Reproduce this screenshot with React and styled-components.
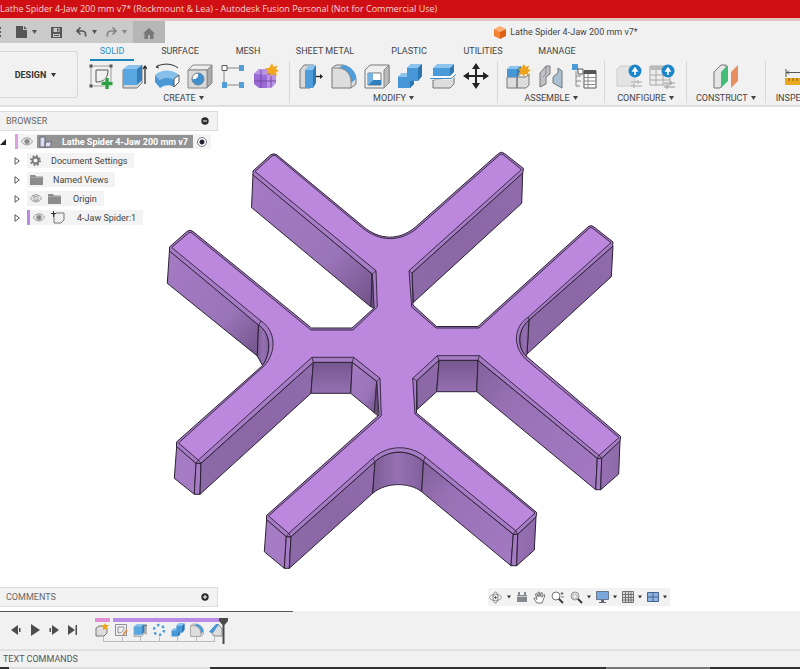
import React, { useState } from "react";
import styled, { createGlobalStyle } from "styled-components";

const GlobalStyle = createGlobalStyle`
  * {
    box-sizing: border-box;
  }
  body {
    margin: 0;
    font-family: Roboto, "Liberation Sans", sans-serif;
    font-size: 9px;
    color: #444;
    background: #f1f1f1;
  }
  button {
    display: flex;
    align-items: center;
    justify-content: center;
    margin: 0;
    padding: 0;
    border: 0;
    background: none;
    font: inherit;
    color: inherit;
    cursor: pointer;
  }
  svg {
    display: block;
    flex-shrink: 0;
  }
`;

const Page = styled.div`
  display: flex;
  flex-direction: column;
  min-height: 100vh;
  overflow: hidden;
`;

const TitleBar = styled.header`
  height: 21px;
  border-bottom: 3px solid #e3c3bd;
  background: #cf0f13;
  color: #f8d3d0;
  font-family: "Open Sans", sans-serif;
  font-size: 9px;
  line-height: 18px;
  white-space: nowrap;
`;

const QuickBar = styled.div`
  display: flex;
  align-items: stretch;
  height: 22px;

  .tools {
    display: flex;
    align-items: center;
    width: 133px;
    background: #cacaca;
    color: #555;
  }
  .home {
    width: 32px;
    padding-top: 2px;
    background: #b6b6b6;
    color: #777;
  }
  .document {
    display: flex;
    flex: 1;
    align-items: center;
    justify-content: center;
    gap: 4px;
    margin-left: 200px;
    margin-right: 33px;
    white-space: nowrap;
  }
`;

const QuickButton = styled.button`
  gap: 5px;
  width: ${(props) => props.$width}px;
  opacity: ${(props) => (props.$faded ? 0.6 : 1)};
`;

const Ribbon = styled.div`
  display: flex;
  height: 64px;
  border-bottom: 2px solid #e0e0e0;
`;

const DesignButton = styled.button`
  flex-shrink: 0;
  gap: 5px;
  width: 78px;
  height: 47px;
  margin-top: 8px;
  padding-right: 6px;
  border: 1px solid #d8d8d8;
  border-left: 0;
  border-radius: 0 3px 3px 0;
  color: #333;
  font-weight: 700;
`;

const RibbonBody = styled.div`
  min-width: 0;
  flex: 1;
`;

const Tabs = styled.nav`
  display: flex;
  height: 18px;
  padding-left: 12px;
`;

const Tab = styled.button`
  width: ${(props) => props.$width}px;
  flex-shrink: 0;
  border-bottom: 2px solid ${(props) => (props.$active ? "#1d86bd" : "transparent")};
  color: ${(props) => (props.$active ? "#2a8fc4" : "#444")};
`;

const Groups = styled.div`
  display: flex;
  height: 42px;
`;

const Group = styled.section`
  display: flex;
  flex-direction: column;
  align-items: center;
  flex-shrink: 0;
  gap: 3px;
  padding: 2px ${(props) => props.$pad}px 0;
  border-right: 1px solid #d6d6d6;

  .icons {
    display: flex;
    gap: 7px;
  }
  .label {
    gap: 3px;
    white-space: nowrap;
    line-height: 12px;
  }
`;

const Viewport = styled.main`
  display: grid;
  flex: 1;
  background: #fff;

  > * {
    grid-area: 1 / 1;
    min-width: 0;
  }
`;

const Overlay = styled.div`
  display: flex;
  flex-direction: column;
  justify-content: space-between;
  padding: 4px 0;
  z-index: 1;
`;

const PanelHeader = styled.div`
  display: flex;
  align-items: center;
  justify-content: space-between;
  width: 218px;
  height: 20px;
  padding: 0 8px 0 6px;
  border: 1px solid #ddd;
  border-left: 0;
  background: #f2f2f2;
  color: #666;
`;

const Tree = styled.ul`
  display: flex;
  flex-direction: column;
  gap: 4px;
  margin: 3px 0 0;
  padding: 0;
  list-style: none;
`;

const TreeRow = styled.li`
  display: flex;
  align-items: center;
  height: 15px;

  .toggle {
    width: ${(props) => (props.$root ? 15 : 27)}px;
    padding-left: ${(props) => (props.$root ? 0 : 7)}px;
    padding-right: ${(props) => (props.$root ? 8 : 0)}px;
  }
`;

const TreeItem = styled.div`
  display: flex;
  align-items: center;
  gap: ${(props) => props.$gap || 4}px;
  height: 15px;
  padding: 0 4px 0 3px;
  background: #f3f3f3;
  border-left: ${(props) => (props.$bar ? `3px solid ${props.$bar}` : "0")};
  white-space: nowrap;

  .name {
    margin-left: 6px;
    margin-right: 3px;
  }
  input {
    appearance: none;
    width: 10px;
    height: 10px;
    margin: 0;
    border: 1px solid #778;
    border-radius: 50%;
    background: radial-gradient(#223 0 2px, #fff 3px);
  }
`;

const RootName = styled.label`
  display: flex;
  align-items: center;
  gap: 10px;
  height: 13px;
  padding: 0 5px 0 2px;
  background: #939393;
  color: #fff;
  font-weight: 700;
`;

const BottomRow = styled.div`
  display: flex;
  align-items: center;
  justify-content: space-between;
  padding-right: 130px;
`;

const NavBar = styled.div`
  display: flex;
  align-items: center;
  justify-content: space-between;
  width: 182px;
  height: 18px;
  padding: 0 3px 0 1px;
  background: #f2f2f2;

  button {
    gap: 4px;
    color: #333;
  }
`;

const Timeline = styled.footer`
  display: flex;
  align-items: flex-start;
  height: 40px;
  border-bottom: 2px solid #e0e0e0;

  &::before {
    content: "";
    width: 293px;
    height: 1px;
    margin-right: -293px;
    background: #555a60;
  }
`;

const Playback = styled.div`
  display: flex;
  align-items: center;
  gap: 7px;
  width: 95px;
  height: 38px;
  padding-left: 10px;
  color: #4c4c4c;
`;

const Track = styled.div`
  width: 124px;
  padding-top: 7px;

  .bars {
    display: flex;
    gap: 3px;
  }
  .steps {
    display: flex;
    gap: 5px;
    padding-top: 1px;
  }
  .rail {
    display: flex;
    justify-content: space-between;
    width: 112px;
    height: 5px;
    margin-left: 8px;
    border-bottom: 1px solid #bbb;
  }
  .rail span {
    width: 1px;
    background: #bbb;
  }
`;

const Bar = styled.span`
  flex: ${(props) => (props.$grow ? 1 : "0 0 15px")};
  height: 4px;
  background: ${(props) => props.$color};
`;

const Marker = styled.div`
  padding-top: 7px;
`;

const TextCommands = styled.div`
  height: 18px;
  padding-left: 3px;
  border-bottom: 2px solid #333;
  border-image: linear-gradient(
      90deg,
      #333 0 11px,
      #ddd 11px 211px,
      #333 211px 605px,
      #777 605px 708px,
      #333 708px
    )
    2;
  color: #555;
  line-height: 16px;
`;

const Caret = ({ size = 5 }) => (
  <svg width={size} height="4" viewBox="0 0 5 4">
    <path d="M0 0h5L2.5 4z" fill="currentColor" />
  </svg>
);

// 26x26 drawings of the ribbon
const icons = {
  sketch: (
    <>
      <path d="M3 3h20v20H3z" fill="none" stroke="#888" strokeWidth=".8" />
      <path d="M8 19V7h12c0 8-4 12-12 12z" fill="none" stroke="#555" strokeWidth="1" />
      <path d="M1.500 1.500h3v3h-3zM21.500 1.500h3v3h-3zM1.500 21.500h3v3h-3z" fill="#555" />
      <path d="M19 15v11M13.500 20.500h11" stroke="#f1f1f1" strokeWidth="5" />
      <path d="M19 15v11M13.500 20.500h11" stroke="#2ea043" strokeWidth="3.400" />
    </>
  ),
  extrude: (
    <>
      <path d="M2 7v18h14l5-5V2" fill="#d8d8d8" stroke="#777" />
      <path d="M2 6l5-4h14l-5 4z" fill="#8cc4ee" />
      <path d="M2 6h14v16H2z" fill="#5aa6e0" />
      <path d="M16 6l5-4v15l-5 5z" fill="#3480bd" />
      <path d="M24 21V4M22 6l2-3 2 3" fill="none" stroke="#222" strokeWidth="1.200" />
    </>
  ),
  revolve: (
    <>
      <path d="M2 4c6-4 16-4 22 1M2 4l3-2M2 4l3 1" fill="none" stroke="#333" />
      <path d="M1 12c6-6 18-6 24 0l-5 5c-4-3-10-3-14 0z" fill="#86bfea" />
      <path d="M1 12l5 5v8l-5-6zM6 17c4-3 10-3 14 0v7c-4-3-10-2-14 1z" fill="#4b98d5" />
      <path d="M20 16l5-4v7l-5 5z" fill="#fff" stroke="#555" />
    </>
  ),
  hole: (
    <>
      <path d="M1 7l5-5h19l-5 5z" fill="#eee" stroke="#888" />
      <path d="M20 7l5-5v18l-5 5z" fill="#aaa" stroke="#888" />
      <path d="M1 7h19v18H1z" fill="#d9d9d9" stroke="#888" />
      <circle cx="11" cy="16" r="6" fill="#fff" stroke="#777" />
      <path d="M11 10a6 6 0 1 1-6 6c4 1 7-2 6-6z" fill="#3f8fcd" />
    </>
  ),
  pattern: (
    <>
      <path d="M4 5h17M4 5v17h17" fill="none" stroke="#888" />
      <path d="M2 2.500h5v5H2z" fill="#fff" stroke="#555" />
      <path d="M19 2h5v6h-5zM2 19h5v6H2zM19 19h5v6h-5z" fill="#559fd8" />
    </>
  ),
  form: (
    <>
      <path d="M1 11l5-5h12l5 5v9l-5 5H6l-5-4z" fill="#9a6bd5" />
      <path d="M1 11l5-5h12l-4 6zM14 12l9-1v9l-5 5h-4z" fill="#b893e6" />
      <path d="M1 18h22M8 7v18M18 8v16" stroke="#73489f" fill="none" />
      <path d="M19 0l1.500 4 4-1.500L23 6l3 2-3 1 1 4-4-2-2 3-1-4-4 1 2-3-3-3 4 0z" fill="#f2a81d" />
    </>
  ),
  pressPull: (
    <>
      <path d="M2 7l4-5h10v18l-4 5H2z" fill="#d9d9d9" stroke="#777" />
      <path d="M7 7l4-5h7l-3 5z" fill="#8cc4ee" />
      <path d="M7 7h8v18H7z" fill="#4e9cda" />
      <path d="M15 7l3-5v18l-3 5z" fill="#2f79b4" />
      <path d="M18 13.500h6" stroke="#222" strokeWidth="1.300" />
      <path d="M22 11l3 2.500-3 2.500z" fill="#222" />
    </>
  ),
  fillet: (
    <>
      <path d="M1 25V5l4-3h7c8 2 13 8 13 15v4l-5 4z" fill="#ddd" stroke="#777" />
      <path d="M8 5l4-3c8 1 13 7 13 14l-5 4C20 12 16 6 8 5z" fill="#4f9ddb" />
      <path d="M1 5h7c8 1 12 7 12 14v6" fill="none" stroke="#888" />
    </>
  ),
  shell: (
    <>
      <path d="M1 7l5-5h19v18l-5 5H1z" fill="#eee" stroke="#777" />
      <path d="M20 7l5-5v18l-5 5z" fill="#bbb" stroke="#888" />
      <path d="M4 10h13v12H4z" fill="#fff" stroke="#777" />
      <path d="M4 10h5v7l-5 5z" fill="#74b2e2" />
      <path d="M4 22l5-5h8v5z" fill="#2f7fbe" />
    </>
  ),
  combine: (
    <>
      <path d="M1 14l4-4h5V5l4-4h11v12l-4 5h-4v3l-4 4H1z" fill="#4797d6" />
      <path d="M10 5l4-4h11l-4 4zM1 14l4-4h5v4z" fill="#8cc4ee" />
      <path d="M21 5l4-4v12l-4 5zM13 18h4v3l-4 4z" fill="#2c75b0" />
    </>
  ),
  split: (
    <>
      <path d="M3 17v8h17l4-4v-7z" fill="#ddd" stroke="#777" />
      <path d="M3 5l4-4h17l-4 4z" fill="#8cc4ee" />
      <path d="M3 5h17v8H3z" fill="#4a9bd9" />
      <path d="M20 5l4-4v8l-4 4z" fill="#2f79b4" />
      <path d="M0 15h21l5-4" fill="none" stroke="#fff" strokeWidth="3" />
      <path d="M0 15.500h21l5-4" fill="none" stroke="#3a88c5" />
    </>
  ),
  move: (
    <>
      <path d="M13 4v18M4 13h18" stroke="#222" strokeWidth="2" />
      <path d="M13 0l4 6H9zM13 26l4-6H9zM0 13l6-4v8zM26 13l-6-4v8z" fill="#222" />
    </>
  ),
  component: (
    <>
      <path d="M2 14h10v11H2zM12 14h9l3-3v11l-3 3h-9z" fill="#ddd" stroke="#777" />
      <path d="M2 6l3-3h11l-4 3z" fill="#8cc4ee" />
      <path d="M2 6h10v8H2z" fill="#4797d6" />
      <path d="M12 6l4-3v8l-4 3z" fill="#2f79b4" />
      <path d="M19 1l1.500 3L24 2.500 23 6l3 1.500L23 9l1 3-4-1-1 3-2-3-4 1 2-4-2-2 3-1z" fill="#eda41c" />
    </>
  ),
  joint: (
    <>
      <path d="M2 10l6-7h4v8l-4 3v7l-6 3z" fill="#bfc3c7" stroke="#777" />
      <path d="M16 13l4-3V5l4 3v17l-9-5v-5z" fill="#a9c1d3" stroke="#777" />
      <path d="M8 3v8l-3 3" fill="none" stroke="#888" />
    </>
  ),
  bom: (
    <>
      <path d="M1 1h6v6H1z" fill="#4b9ad8" />
      <path d="M7 6h5v5H7z" fill="#fff" stroke="#555" />
      <path d="M5 8v15h4M5 13h5M5 18h5" fill="none" stroke="#888" />
      <path d="M13 8h12v17H13z" fill="#fff" stroke="#555" />
      <path d="M13 7h12v4H13z" fill="#555" />
      <path d="M13 14.500h12M13 18h12M13 21.500h12M17 11v14" stroke="#888" />
    </>
  ),
  configure: (
    <>
      <path d="M1 6l4-3h14v17l-3 3H1z" fill="#e3e3e3" stroke="#ccc" />
      <path d="M15 19h11M15 23h11M22 17v4M18 21v4" stroke="#aaa" />
      <circle cx="19" cy="8" r="6.500" fill="#1d85c9" />
      <path d="M19 12V6M17 8l2-3 2 3z" fill="#fff" stroke="#fff" strokeWidth="1.500" />
    </>
  ),
  configTable: (
    <>
      <path d="M1 3h20v19H1z" fill="#eee" stroke="#aaa" />
      <path d="M1 3h20v4H1z" fill="#bbb" />
      <path d="M1 12h20M1 17h20M7 7v15M14 7v15" stroke="#aaa" />
      <path d="M15 20h11M15 24h11M22 18v4M18 22v4" stroke="#999" />
      <circle cx="19" cy="8" r="6.500" fill="#1d85c9" />
      <path d="M19 12V6M17 8l2-3 2 3z" fill="#fff" stroke="#fff" strokeWidth="1.500" />
    </>
  ),
  plane: (
    <>
      <path d="M1 9l7-7h5v16l-6 7H1z" fill="#e6e6e6" stroke="#777" />
      <path d="M8 9l7-7v16l-7 7z" fill="#43bd77" />
      <path d="M18 9l7-7v16l-7 7z" fill="#e58e60" />
    </>
  ),
  measure: (
    <>
      <path d="M1 6v8M1 9.500h24M4 7.500l-2 2 2 2" fill="none" stroke="#555" />
      <path d="M0 15h26v7H0z" fill="#e9a81f" />
      <path d="M4 15v3M8 15v3M12 15v3M16 15v3" stroke="#7e5b12" />
    </>
  ),
};

const Icon = ({ name, size = 26 }) => (
  <svg width={size} height={size} viewBox="0 0 26 26">
    {icons[name]}
  </svg>
);

const Eye = ({ off }) => (
  <svg width="12" height="9" viewBox="0 0 12 9">
    <path d="M.5 4.500C3-.5 9-.5 11.500 4.500 9 9 3 9 .5 4.500z" fill="#eee" stroke="#999" />
    <circle cx="6" cy="4.500" r="2.300" fill={off ? "#eee" : "#888"} stroke="#999" />
    {off && <path d="M2 1l7 7" stroke="#aaa" />}
  </svg>
);

const Folder = () => (
  <svg width="13" height="10" viewBox="0 0 13 10">
    <path d="M0 0h5l1 1.500h7V10H0z" fill="#8c8c8c" />
    <path d="M0 2.500h13" stroke="#bbb" strokeWidth=".6" />
  </svg>
);

const Expander = ({ open }) => (
  <svg width="7" height="8" viewBox="0 0 7 8">
    {open ? <path d="M6 1v6H0z" fill="#222" /> : <path d="M1 .7v6.600L5.300 4z" fill="#fff" stroke="#555" />}
  </svg>
);

const RoundButton = ({ plus }) => (
  <button aria-label={plus ? "Expand" : "Collapse"}>
    <svg width="8" height="8" viewBox="0 0 8 8">
      <circle cx="4" cy="4" r="3.700" fill="#2b2b2b" />
      <path d={plus ? "M2 4h4M4 2v4" : "M2 4h4"} stroke="#fff" />
    </svg>
  </button>
);

const walls = [
  ["M253 174L372 274L371 307L251.500 207.500Z", "right"],
  ["M169.500 250L258.500 325L257.300 356L167.300 283.300Z", "right"],
  ["M258.500 325C271 333 272 352 262.500 365.500L257.300 356Z", "bend"],
  ["M412 273L522.700 172.700L521.700 203.300L413.300 302.500Z", "left"],
  ["M529 320L613 246L611.300 276.700L527 354Z", "left"],
  ["M529 320C515 332 519 350 526 356L527 354Z", "bend"],
  ["M176.700 446L196 463.300L194.300 494.300L174.300 478.300Z", "flat"],
  ["M196 463.300H201L200 494.300H194.300Z", "flat"],
  ["M201 463.300L313.300 362.300L311 393.300L200 494.300Z", "left"],
  ["M313.300 362.300H352.300L350.700 393.300H311Z", "down"],
  ["M352.300 362.300L376.700 381.300L374.300 412.700L350.700 393.300Z", "right"],
  ["M266.700 519L286.300 536.700L284.300 568.300L264.300 551.700Z", "flat"],
  ["M286.300 536.700H291L289.300 568.300H284.300Z", "flat"],
  ["M291 536.700L375 461.700L372.700 493.300L289.300 568.300Z", "left"],
  ["M375 461.700C383 454 391 452.300 400 452.300S415 455 423.500 461.300L421.700 491.700C409 482 386 482 372.700 493.300Z", "bend"],
  ["M423.500 461.300L513.300 534.300L511 565.700L421.700 491.700Z", "out"],
  ["M513.300 534.300H517.700L516.700 565.700H511Z", "flat"],
  ["M517.700 534.300L536 516.700L534.300 550L516.700 565.700Z", "end"],
  ["M416.700 380.700L439 360.300L436.700 391.700L417.300 409.300Z", "left"],
  ["M439 360.300H478L476.700 391.700H436.700Z", "down"],
  ["M478 360.300L597.300 458.300L595.700 489.700L476.700 391.700Z", "out"],
  ["M597.300 458.300H601.700L600.700 489.700H595.700Z", "flat"],
  ["M601.700 458.300L620 440.700L618.700 474L600.700 489.700Z", "end"],
];

const bevelPath =
  "M271 154.500Q274 153 277 155L363.300 226.500C380 240.500 399 240.500 415 227.500L498.500 153.500Q501.500 151 504.500 153.500L523.500 168.500L522.700 173L412 273L413 305L436.500 326.500H478L588.500 226.500Q591.500 224.500 594 227L613 242L612.500 246.500L529 320C515 332 519 350 526 356L620.700 436.500L620 441L601.700 458.300H597.300L478 360.300H439L416.700 380.700L416.500 413L536.700 512.500L536 517L517.700 534.300H513.300L423.500 461.300C409 449 389 449 375 461.700L291 536.700H286.300L266.500 519.500V515.500L379 415L376.700 381.300L352.300 362.300H313.300L201 463.300H196L176.500 446.500V442L262.500 365.500C272 352 271 333 258.500 325L169.500 251V247L187 231.500Q190 229 193 231.500L311.500 328H352L374 308L372.300 274L253 175V171Z";

const topPath =
  "M272 156Q274 154.500 276 156L362.500 228C380 242 400 242 416 229L499.500 155Q501.500 153.500 503.500 155L521.500 169.500L409 270.700L411.700 307L436 328H479L589.500 228Q591 227 593 228.500L611 242.700L528.300 317C513 327 513 347 525.500 359L619 437.500L599.300 455H598.500L479.300 355.700H437.300L412.700 378.300L415 414L535 513L515.700 530.700L425 456.700C410 444.500 388 444.500 372.700 458.300L288.700 533.300L268.500 516L381.300 415.700L380 378.300L353.700 357.300H312L198.300 460L178.500 443L264 366C277 352 276 331 261 321L171.700 247.500L188.500 233Q190 231.500 192 233L311 330H353L377.300 307L376 270.700L255 171.500Z";

const Model = () => (
  <svg width="100%" height="100%" viewBox="0 107 800 504" role="img" aria-label="4-Jaw Spider">
    <defs>
      <linearGradient id="right" x1="0" y1="0" x2="1" y2="1">
        <stop offset="0" stopColor="#a57bc4" />
        <stop offset=".65" stopColor="#9a74b8" />
        <stop offset="1" stopColor="#715389" />
      </linearGradient>
      <linearGradient id="left" x1="1" y1="0" x2="0" y2="1">
        <stop offset="0" stopColor="#916cad" />
        <stop offset=".5" stopColor="#8b67a6" />
        <stop offset="1" stopColor="#8c69a7" />
      </linearGradient>
      <linearGradient id="down" x1="0" y1="0" x2="0" y2="1">
        <stop offset="0" stopColor="#76578f" />
        <stop offset="1" stopColor="#9570b1" />
      </linearGradient>
      <linearGradient id="bend">
        <stop offset="0" stopColor="#7d5e96" />
        <stop offset=".5" stopColor="#9670b3" />
        <stop offset="1" stopColor="#81609b" />
      </linearGradient>
      <linearGradient id="out" x1="0" y1="0" x2="1" y2="1">
        <stop offset="0" stopColor="#80609a" />
        <stop offset=".3" stopColor="#9871b5" />
        <stop offset="1" stopColor="#a37ac2" />
      </linearGradient>
      <linearGradient id="end">
        <stop offset="0" stopColor="#9670b3" />
        <stop offset="1" stopColor="#8e6aa9" />
      </linearGradient>
      <linearGradient id="flat">
        <stop offset="0" stopColor="#a57cc4" />
        <stop offset="1" stopColor="#a57cc4" />
      </linearGradient>
    </defs>
    <g stroke="#2c2135" strokeLinejoin="round">
      {walls.map(([d, shade]) => (
        <path key={d} d={d} fill={`url(#${shade})`} />
      ))}
      <path d={bevelPath} fill="#a77cc6" />
      <path d={topPath} fill="#bb88de" strokeWidth=".9" />
      <path d="M372.300 274L371 307L374 308.500ZM376.700 381.300L374.300 413L378 416Z" fill="#6b5080" strokeWidth=".7" />
      <path
        d="M258.500 325L261 321M529 320L528.300 317M372.300 274L376 270.700M412 273L409 270.700M313.300 362.300L312 357.300M352.300 362.300L353.700 357.300M376.700 381.300L380 378.300M416.700 380.700L412.700 378.300M439 360.300L437.300 355.700M478 360.300L479.300 355.700M375 461.700L372.700 458.300M423.500 461.300L425 456.700M196 463.300L198.300 460L201 463.300M286.300 536.700L288.700 533.300L291 536.700M513.300 534.300L515.700 530.700L517.700 534.300M597.300 458.300L599 455L601.700 458.300"
        fill="none"
        strokeWidth=".8"
      />
    </g>
  </svg>
);

const tabs = [
  ["SOLID", 44],
  ["SURFACE", 92],
  ["MESH", 44],
  ["SHEET METAL", 110],
  ["PLASTIC", 58],
  ["UTILITIES", 90],
  ["MANAGE", 58],
];

const groups = [
  { label: "CREATE", pad: 10, items: ["sketch", "extrude", "revolve", "hole", "pattern", "form"] },
  { label: "MODIFY", pad: 8, items: ["pressPull", "fillet", "shell", "combine", "split", "move"] },
  { label: "ASSEMBLE", pad: 7, items: ["component", "joint", "bom"] },
  { label: "CONFIGURE", pad: 11, items: ["configure", "configTable"] },
  { label: "CONSTRUCT", pad: 9, items: ["plane"] },
  { label: "INSPECT", pad: 10, items: ["measure"] },
];

const App = () => {
  const [activeTab, setActiveTab] = useState("SOLID");

  return (
    <Page>
      <GlobalStyle />
      <TitleBar>
        Lathe Spider 4-Jaw 200 mm v7* (Rockmount &amp; Lea) - Autodesk Fusion Personal (Not for Commercial Use)
      </TitleBar>
      <QuickBar>
        <div className="tools">
          <QuickButton $width={12} aria-label="Data panel">
            <svg width="12" height="12" viewBox="0 0 12 12">
              <path d="M0 1h1v2H0zM0 5h1v2H0zM0 9h1v2H0z" fill="currentColor" />
            </svg>
          </QuickButton>
          <QuickButton $width={28} aria-label="File">
            <svg width="11" height="12" viewBox="0 0 11 12">
              <path d="M0 0h7v4h4v8H0zM8 0l3 3H8z" fill="currentColor" />
            </svg>
            <Caret />
          </QuickButton>
          <QuickButton $width={32} aria-label="Save">
            <svg width="11" height="11" viewBox="0 0 11 11">
              <path d="M0 0h11v11H0z" fill="currentColor" />
              <path d="M2.500 1h6v4h-6zM2 7h7v3H2z" fill="#cacaca" />
              <path d="M6 1.500h1.500v3H6zM3 8h5v1H3z" fill="currentColor" />
            </svg>
          </QuickButton>
          <QuickButton $width={29} aria-label="Undo">
            <svg width="11" height="10" viewBox="0 0 11 10">
              <path d="M1 4h5c3 0 4 2 3.500 5.500M4.500 .5L1 4l3.500 3.500" fill="none" stroke="currentColor" strokeWidth="1.600" />
            </svg>
            <Caret />
          </QuickButton>
          <QuickButton $width={31} $faded aria-label="Redo">
            <svg width="11" height="10" viewBox="0 0 11 10">
              <path d="M10 4H5C2 4 1 6 1.500 9.500M6.500 .5L10 4 6.500 7.500" fill="none" stroke="currentColor" strokeWidth="1.600" />
            </svg>
            <Caret />
          </QuickButton>
        </div>
        <button className="home" aria-label="Home">
          <svg width="12" height="11" viewBox="0 0 12 11">
            <path d="M6 0l6 5.500h-1.500V11H7V7H5v4H1.500V5.500H0z" fill="currentColor" />
          </svg>
        </button>
        <div className="document">
          <svg width="12" height="13" viewBox="0 0 12 13">
            <path d="M0 3l6-3 6 3-6 3z" fill="#ffad73" />
            <path d="M0 3l6 3v7l-6-3z" fill="#f58233" />
            <path d="M12 3L6 6v7l6-3z" fill="#dc6212" />
          </svg>
          Lathe Spider 4-Jaw 200 mm v7*
        </div>
      </QuickBar>
      <Ribbon>
        <DesignButton>
          DESIGN <Caret />
        </DesignButton>
        <RibbonBody>
          <Tabs>
            {tabs.map(([name, width]) => (
              <Tab key={name} $width={width} $active={name === activeTab} onClick={() => setActiveTab(name)}>
                {name}
              </Tab>
            ))}
          </Tabs>
          <Groups>
            {groups.map((group) => (
              <Group key={group.label} $pad={group.pad}>
                <div className="icons">
                  {group.items.map((name) => (
                    <button key={name} aria-label={name}>
                      <Icon name={name} />
                    </button>
                  ))}
                </div>
                <button className="label">
                  {group.label} <Caret />
                </button>
              </Group>
            ))}
          </Groups>
        </RibbonBody>
      </Ribbon>
      <Viewport>
        <Model />
        <Overlay>
          <div>
            <PanelHeader>
              BROWSER <RoundButton />
            </PanelHeader>
            <Tree>
              <TreeRow $root>
                <button className="toggle" aria-label="Collapse root">
                  <Expander open />
                </button>
                <TreeItem $bar="#dfa0e0">
                  <Eye />
                  <RootName htmlFor="activeRoot">
                    <svg width="13" height="12" viewBox="0 0 13 12">
                      <path d="M1 1h5v10H1zM6 6h4l2-1v5l-2 1H6z" fill="#dde" stroke="#667" />
                    </svg>
                    Lathe Spider 4-Jaw 200 mm v7
                  </RootName>
                  <input type="radio" id="activeRoot" defaultChecked />
                </TreeItem>
              </TreeRow>
              <TreeRow>
                <button className="toggle" aria-label="Expand settings">
                  <Expander />
                </button>
                <TreeItem>
                  <svg width="11" height="11" viewBox="0 0 11 11">
                    <circle cx="5.500" cy="5.500" r="4.500" fill="none" stroke="#777" strokeWidth="2" strokeDasharray="1.800 1.730" />
                    <circle cx="5.500" cy="5.500" r="3" fill="none" stroke="#777" strokeWidth="1.800" />
                  </svg>
                  <span className="name">Document Settings</span>
                </TreeItem>
              </TreeRow>
              <TreeRow>
                <button className="toggle" aria-label="Expand views">
                  <Expander />
                </button>
                <TreeItem>
                  <Folder />
                  <span className="name">Named Views</span>
                </TreeItem>
              </TreeRow>
              <TreeRow>
                <button className="toggle" aria-label="Expand origin">
                  <Expander />
                </button>
                <TreeItem $gap={6}>
                  <Eye off />
                  <Folder />
                  <span className="name">Origin</span>
                </TreeItem>
              </TreeRow>
              <TreeRow>
                <button className="toggle" aria-label="Expand component">
                  <Expander />
                </button>
                <TreeItem $bar="#b98ae6" $gap={6}>
                  <Eye />
                  <svg width="14" height="13" viewBox="0 0 14 13">
                    <path d="M3 4l2-2h8v7l-3 3H3z" fill="#eee" stroke="#777" />
                    <path d="M2.500 0v6M0 2.500h5" stroke="#333" />
                  </svg>
                  <span className="name">4-Jaw Spider:1</span>
                </TreeItem>
              </TreeRow>
            </Tree>
          </div>
          <BottomRow>
            <PanelHeader>
              COMMENTS <RoundButton plus />
            </PanelHeader>
            <NavBar>
              <button aria-label="Orbit">
                <svg width="14" height="13" viewBox="0 0 14 13">
                  <ellipse cx="6.500" cy="6.500" rx="6" ry="3" fill="none" stroke="#888" strokeWidth=".8" />
                  <ellipse cx="6.500" cy="6.500" rx="2.500" ry="5.500" fill="none" stroke="#666" strokeWidth=".8" />
                  <path d="M5 6.500h3M6.500 5v3" stroke="#444" strokeWidth=".8" />
                </svg>
                <Caret size={4} />
              </button>
              <button aria-label="Look at">
                <svg width="12" height="12" viewBox="0 0 12 12">
                  <path d="M1 4h10v7H1zM2 1h2v3H2zM8 1h2v3H8z" fill="#858990" />
                  <path d="M1 5.500h10" stroke="#ccc" />
                </svg>
              </button>
              <button aria-label="Pan">
                <svg width="13" height="13" viewBox="0 0 13 13">
                  <path
                    d="M4 12L.8 7.500 2 6.800l2 1.700L2.500 3l1-.6L5.200 6 5 1.300l1.200-.3L7 5.700 8.200 1.500l1.200.4-.6 4.400L11 3.500l1 .6-2 5.400L9 12z"
                    fill="#fff"
                    stroke="#555"
                    strokeWidth=".8"
                  />
                </svg>
              </button>
              <button aria-label="Zoom">
                <svg width="13" height="13" viewBox="0 0 13 13">
                  <circle cx="5" cy="5" r="4" fill="#fff" stroke="#777" />
                  <path d="M8 8l4 4" stroke="#333" strokeWidth="1.800" />
                  <path d="M11 1v3M9.500 2.500h3M10 6h3" stroke="#555" strokeWidth=".8" />
                </svg>
              </button>
              <button aria-label="Zoom window">
                <svg width="13" height="13" viewBox="0 0 13 13">
                  <circle cx="5" cy="5" r="4" fill="#ddd" stroke="#999" />
                  <path d="M3 4h4v3H3z" fill="#fff" stroke="#999" strokeWidth=".6" />
                  <path d="M8 8l4 4" stroke="#333" strokeWidth="1.800" />
                </svg>
                <Caret size={4} />
              </button>
              <button aria-label="Display settings">
                <svg width="13" height="12" viewBox="0 0 13 12">
                  <path d="M.5.5h12v8H.5z" fill="#79a8dc" stroke="#68788c" />
                  <path d="M5 9h3v2H5zM3 11h7v1H3z" fill="#667" />
                </svg>
                <Caret size={4} />
              </button>
              <button aria-label="Grid">
                <svg width="12" height="12" viewBox="0 0 12 12">
                  <path d="M.5.5h11v11H.5zM.5 3.500h11M.5 6.500h11M.5 9h11M3.500.5v11M6.500.5v11M9 .5v11" fill="#ddd" stroke="#666" strokeWidth=".9" />
                </svg>
                <Caret size={4} />
              </button>
              <button aria-label="Viewports">
                <svg width="12" height="10" viewBox="0 0 12 10">
                  <path d="M.5.5h11v9H.5zM.5 5h11M6 .5v9" fill="#8bb4e4" stroke="#47658c" />
                </svg>
                <Caret size={4} />
              </button>
            </NavBar>
          </BottomRow>
        </Overlay>
      </Viewport>
      <Timeline>
        <Playback>
          <button aria-label="Step back">
            <svg width="12" height="10" viewBox="0 0 12 10">
              <path d="M8 0v10L1 5zM9 3h1.500v4H9z" fill="currentColor" />
            </svg>
          </button>
          <button aria-label="Play">
            <svg width="12" height="12" viewBox="0 0 12 12">
              <path d="M2 0l9 6-9 6z" fill="currentColor" />
            </svg>
          </button>
          <button aria-label="Step forward">
            <svg width="12" height="10" viewBox="0 0 12 10">
              <path d="M4 0v10l7-5zM1.500 3H3v4H1.500z" fill="currentColor" />
            </svg>
          </button>
          <button aria-label="Go to end">
            <svg width="12" height="10" viewBox="0 0 12 10">
              <path d="M1 0v10l7-5zM8.500 0H10v10H8.500z" fill="currentColor" />
            </svg>
          </button>
        </Playback>
        <Track>
          <div className="bars">
            <Bar $color="#e08fd6" />
            <Bar $color="#b98ae6" $grow />
          </div>
          <div className="steps">
            {["component", "sketch", "extrude", "pattern", "combine", "fillet", "chamfer"].map((name) => (
              <button key={name} aria-label={`${name} feature`}>
                <svg width="14" height="14" viewBox="0 0 14 14">
                  {name === "component" && (
                    <>
                      <path d="M1 5l3-2h6l2 3v4l-3 3H1z" fill="#ddd" stroke="#777" />
                      <path d="M10 0l1 2 3 0-2 2 1 3-3-1-2 1 0-3-2-2 3 0z" fill="#eda41c" />
                    </>
                  )}
                  {name === "sketch" && (
                    <>
                      <path d="M1.500 1.500h11v11h-11zM4 4h6c0 4-2 6-6 6z" fill="none" stroke="#778" strokeWidth=".8" />
                      <path d="M13 7l-4 5" stroke="#e58e3c" strokeWidth="2" />
                    </>
                  )}
                  {name === "pattern" && (
                    <circle cx="7" cy="7" r="5" fill="none" stroke="#559fd8" strokeWidth="2.500" strokeDasharray="2.500 2.740" />
                  )}
                  {name === "chamfer" && (
                    <>
                      <path d="M1 8l6-6h3l3 4v7H5z" fill="#ddd" stroke="#888" />
                      <path d="M0 9l7-8h3L4 10z" fill="#4797d6" />
                    </>
                  )}
                  {["extrude", "combine", "fillet"].includes(name) && (
                    <svg width="14" height="14" viewBox="0 0 26 26">
                      {icons[name]}
                    </svg>
                  )}
                </svg>
              </button>
            ))}
          </div>
          <div className="rail">
            {[0, 1, 2, 3, 4, 5, 6].map((n) => (
              <span key={n} />
            ))}
          </div>
        </Track>
        <Marker>
          <svg width="10" height="26" viewBox="0 0 10 26">
            <path d="M0 0h9v3L5.500 7v19h-2V7L0 3z" fill="#4a4a4a" />
          </svg>
        </Marker>
      </Timeline>
      <TextCommands>TEXT COMMANDS</TextCommands>
    </Page>
  );
};

export default App;
